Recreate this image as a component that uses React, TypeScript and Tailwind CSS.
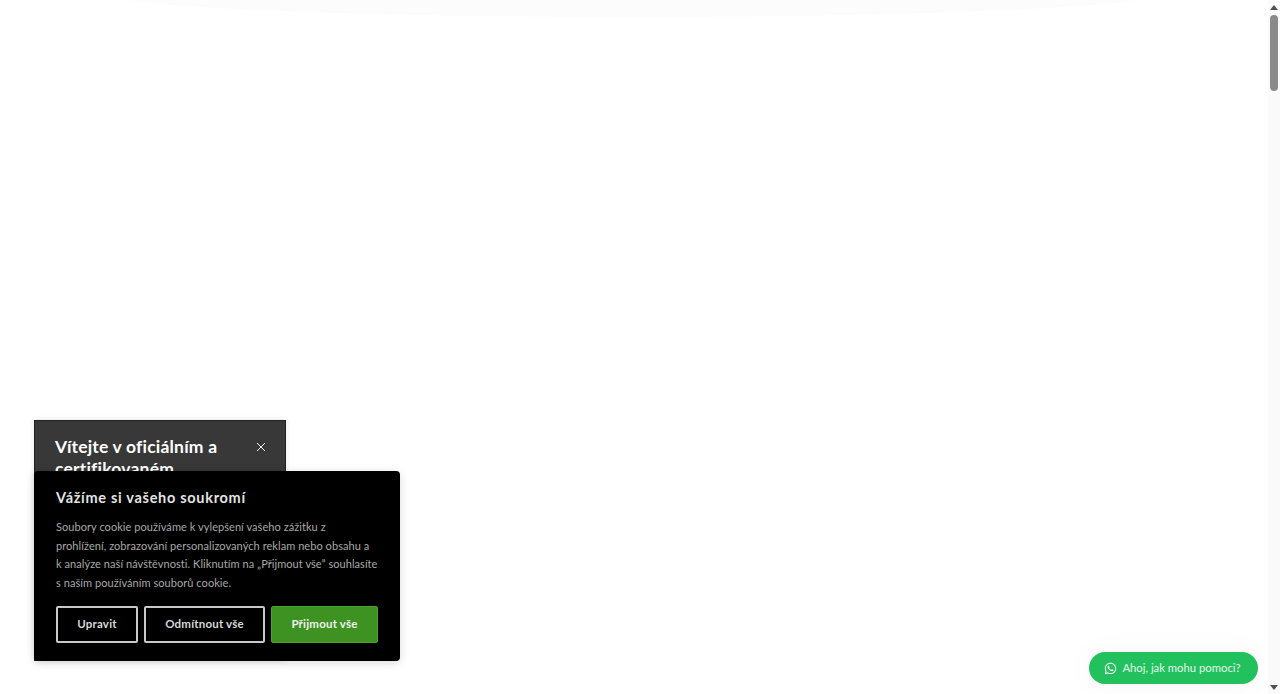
import { FaWhatsapp } from 'react-icons/fa';

const font = { fontFamily: '"Lato", "Noto Sans", sans-serif' };

function Scrollbar() {
  return (
    <div className="absolute right-0 top-0 bottom-0 w-[12px] bg-[#fafafa] flex flex-col items-center">
      <div className="h-[14px] flex items-center justify-center">
        <div className="w-0 h-0 border-x-[4px] border-x-transparent border-b-[5px] border-b-[#505050]" />
      </div>
      <div className="w-[8px] h-[76px] mt-px rounded-full bg-[#8a8a8a]" />
      <div className="mt-auto h-[14px] flex items-center justify-center">
        <div className="w-0 h-0 border-x-[4px] border-x-transparent border-t-[5px] border-t-[#505050]" />
      </div>
    </div>
  );
}

function CookieButton({ label, primary, width }: { label: string; primary?: boolean; width: string }) {
  return (
    <button
      className={`${width} h-[37px] pb-[2px] rounded-[2px] text-[11.5px] font-bold tracking-[0.2px] ${
        primary
          ? 'bg-[#3e9222] border border-[#4aa32a] text-[#f0f0f0]'
          : 'bg-black border-2 border-[#c8c8c8] text-[#d8d8d8]'
      }`}
    >
      {label}
    </button>
  );
}

export default function App() {
  return (
    <main className="relative w-full h-[694px] bg-white overflow-hidden" style={font}>
      {/* Faint shadow from the hidden header */}
      <div className="absolute left-[105px] top-[-30px] w-[1055px] h-[47px] rounded-[50%] bg-[#fcfcfc]" />

      <div className="absolute left-[34px] top-[420px] w-[252px] h-[241px] bg-[#383838] border border-[#222] shadow-[0_0_6px_rgba(0,0,0,0.1)] overflow-hidden">
        <div className="flex justify-between pl-[20px] pr-[19px] pt-[15px]">
          <h2 className="w-[170px] text-[17.5px] leading-[22px] font-bold tracking-[0.2px] text-white">
            Vítejte v oficiálním a certifikovaném
          </h2>
          <svg className="w-[10px] h-[10px] mt-[6px]" viewBox="0 0 10 10" stroke="#f2f2f2" strokeWidth="1">
            <path d="M1 1l8 8M9 1l-8 8" />
          </svg>
        </div>
      </div>

      <section className="absolute left-[34px] top-[471px] w-[366px] h-[190px] bg-black rounded-[4px] shadow-[0_2px_10px_rgba(0,0,0,0.15)] pl-[22px] pr-[22px] pt-[17px]">
        <h3 className="text-[14.5px] leading-[20px] font-bold tracking-[0.7px] text-[#e4e4e4]">
          Vážíme si vašeho soukromí
        </h3>
        <p className="mt-[10px] text-[11px] leading-[18.7px] tracking-[0.06px] text-[#a8a8a8] whitespace-nowrap">
          Soubory cookie používáme k vylepšení vašeho zážitku z<br />
          prohlížení, zobrazování personalizovaných reklam nebo obsahu a<br />
          k analýze naší návštěvnosti. Kliknutím na „Přijmout vše” souhlasíte<br />
          s naším používáním souborů cookie.
        </p>
        <div className="flex gap-[6px] mt-[13px]">
          <CookieButton label="Upravit" width="w-[82px]" />
          <CookieButton label="Odmítnout vše" width="w-[121px]" />
          <CookieButton label="Přijmout vše" width="w-[107px]" primary />
        </div>
      </section>

      <a className="absolute left-[1089px] top-[652px] w-[169px] h-[32px] rounded-full bg-[#22c15e] shadow-[0_0_30px_rgba(0,0,0,0.04)] flex items-center justify-center gap-[5px] pr-[2px] text-[11.3px] text-[#e0f7e9]">
        <FaWhatsapp className="w-[13px] h-[13px] text-white" />
        <span>Ahoj, jak mohu pomoci?</span>
      </a>

      <Scrollbar />
    </main>
  );
}
